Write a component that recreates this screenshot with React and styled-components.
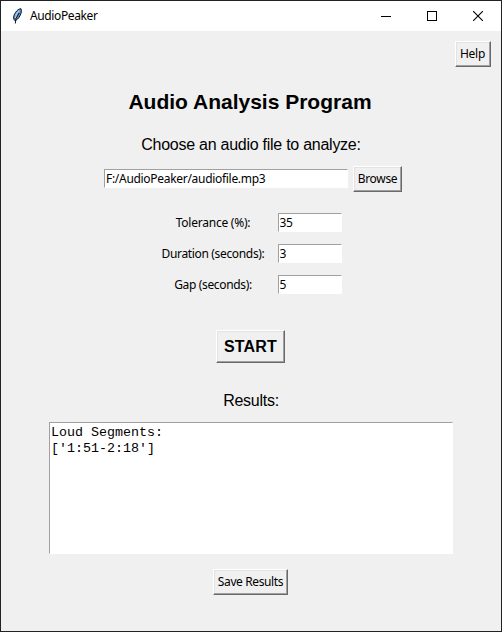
import React from 'react';
import styled, { createGlobalStyle, css } from 'styled-components';

const GlobalStyle = createGlobalStyle`
  * { box-sizing: border-box; }
  body { margin: 0; background: #f0f0f0; }
`;

const uiFont = css`
  font-family: "Noto Sans", "Open Sans", sans-serif;
  font-size: 12px;
  line-height: 16px;
  letter-spacing: ${(p) => p.$track || '-0.3px'};
  color: #000;
  white-space: nowrap;
`;

const Window = styled.div`
  width: 502px;
  height: 632px;
  border: 1px solid #222224;
  background: #f0f0f0;
  display: flex;
  flex-direction: column;
  overflow: hidden;
`;

const TitleBar = styled.header`
  height: 30px;
  flex: none;
  background: #fff;
  display: flex;
  align-items: center;
  padding-left: 8px;
`;

const WindowTitle = styled.span`
  ${uiFont}
  margin-left: 5px;
  flex: 1;
`;

const Caption = styled.button`
  width: 46px;
  height: 30px;
  padding: 0;
  border: 0;
  background: none;
  display: flex;
  align-items: center;
  justify-content: center;
`;

const Content = styled.main`
  flex: 1;
  display: flex;
  flex-direction: column;
  align-items: center;
`;

const HelpRow = styled.div`
  align-self: stretch;
  display: flex;
  justify-content: flex-end;
  padding: 10px 10px 0 0;
`;

const Button = styled.button`
  ${uiFont}
  width: ${(p) => p.$width}px;
  height: 26px;
  padding: 0;
  border: 1px solid;
  border-color: #fff #696969 #696969 #fff;
  box-shadow: inset -1px -1px #a0a0a0, inset 1px 1px #e3e3e3;
  background: #f0f0f0;
  display: flex;
  align-items: center;
  justify-content: center;
`;

const HelpButton = styled(Button)`
  padding-right: 1px;
`;

const SaveButton = styled(Button)`
  margin-right: 1px;
`;

const StartButton = styled(Button)`
  height: 33px;
  margin: 36px 1px 0 0;
  font: bold 16px/20px "Liberation Sans", Arial, sans-serif;
  letter-spacing: 0.15px;
`;

const Heading = styled.h1`
  margin: 22px 2px 0 0;
  font: bold 21px/26px "Liberation Sans", Arial, sans-serif;
  white-space: nowrap;
`;

const SubHeading = styled.h2`
  margin: ${(p) => p.$top}px 0 0;
  font: 16px/20px "Liberation Sans", Arial, sans-serif;
  letter-spacing: -0.26px;
  white-space: nowrap;
`;

const FileRow = styled.div`
  display: flex;
  align-items: flex-start;
  gap: 5px;
  margin: 11px 0 0 4px;
`;

const Entry = styled.input`
  ${uiFont}
  width: ${(p) => p.$width}px;
  height: 19px;
  margin: ${(p) => p.$top || 0}px 0 0;
  padding: 0 1px;
  border: 1px solid;
  border-color: #a0a0a0 #fff #fff #a0a0a0;
  border-radius: 0;
  outline: none;
  background: #fff;
`;

const Settings = styled.div`
  display: grid;
  grid-template-columns: 103px 64px;
  grid-auto-rows: 19px;
  gap: 12px 13px;
  align-items: center;
  margin: 21px 0 0 1px;
`;

const Label = styled.label`
  ${uiFont}
  text-align: center;
`;

const Results = styled.pre`
  width: 404px;
  height: 132px;
  margin: 11px 0 15px;
  padding: 2px 1px;
  border: 1px solid;
  border-color: #a0a0a0 #fff #fff #a0a0a0;
  background: #fff;
  font: 13.33px/16px "Liberation Mono", "Courier New", monospace;
  color: #000;
`;

const FeatherIcon = () => (
  <svg width="16" height="16" viewBox="0 0 16 16" fill="none">
    <path d="M5.8 12.6C3.9 10.8 4.5 7.3 6.5 4.5C8.2 2 10 .8 12 .7C12.8 3 12.3 5.2 11 7.7C9.6 10.4 8 12 5.8 12.6Z" fill="#5c93cf" stroke="#10151d" strokeWidth="1" />
    <path d="M6.6 10C6.6 7.5 8 4.5 10.4 2.5" stroke="#a9cdf2" strokeWidth="1.2" />
    <path d="M10.2 5L7 10.5L6.3 15.5" stroke="#10151d" strokeWidth="1" />
  </svg>
);

const fields = [
  { label: 'Tolerance (%):', value: '35', track: '-0.24px' },
  { label: 'Duration (seconds):', value: '3', track: '-0.34px' },
  { label: 'Gap (seconds):', value: '5', track: '-0.34px' },
];

export default function App() {
  return (
    <>
      <GlobalStyle />
      <Window>
        <TitleBar>
          <FeatherIcon />
          <WindowTitle $track="-0.38px">AudioPeaker</WindowTitle>
          <Caption aria-label="Minimize">
            <svg width="10" height="10" shapeRendering="crispEdges"><path d="M0 5.5H10" stroke="#000" /></svg>
          </Caption>
          <Caption aria-label="Maximize">
            <svg width="10" height="10" shapeRendering="crispEdges"><path d="M.5 .5H9.5V9.5H.5Z" fill="none" stroke="#000" /></svg>
          </Caption>
          <Caption aria-label="Close">
            <svg width="10" height="10"><path d="M0 0L10 10M10 0L0 10" stroke="#000" strokeWidth="1.1" /></svg>
          </Caption>
        </TitleBar>
        <Content>
          <HelpRow><HelpButton $width={36}>Help</HelpButton></HelpRow>
          <Heading>Audio Analysis Program</Heading>
          <SubHeading $top={20}>Choose an audio file to analyze:</SubHeading>
          <FileRow>
            <Entry $width={244} $top={3} defaultValue="F:/AudioPeaker/audiofile.mp3" />
            <Button $width={49}>Browse</Button>
          </FileRow>
          <Settings>
            {fields.map((f) => (
              <React.Fragment key={f.label}>
                <Label $track={f.track}>{f.label}</Label>
                <Entry $width={64} defaultValue={f.value} />
              </React.Fragment>
            ))}
          </Settings>
          <StartButton $width={69}>START</StartButton>
          <SubHeading $top={28}>Results:</SubHeading>
          <Results>{"Loud Segments:\n['1:51-2:18']"}</Results>
          <SaveButton $width={75} $track="-0.38px">Save Results</SaveButton>
        </Content>
      </Window>
    </>
  );
}
